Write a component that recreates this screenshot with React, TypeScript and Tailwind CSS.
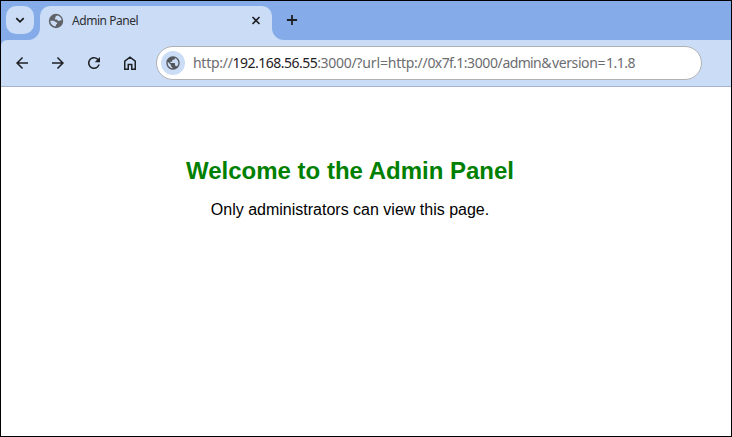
import React from "react";
import { MdArrowBack, MdArrowForward, MdRefresh, MdPublic } from "react-icons/md";

function TabGlobe() {
  return (
    <svg viewBox="0 0 16 16" className="size-4 shrink-0">
      <circle cx="8" cy="8" r="7.2" fill="#5f6368" />
      <path
        d="M9.4 2.5C8.2 2.9 7.4 3.3 7.5 4.2c.1.7-.7.8-.7 1.5 0 .9 1.1.8 1.9.9 1 .1.8 1.4 1.7 1.5.9.1 1.4-.4 2.1-.8.5-.2 1-.2 1.2.1C13.600 5 11.900 3 9.400 2.500Z"
        fill="#cbdcf6"
      />
      <path
        d="M2.300 7.800h3.200c1.100 0 1.200.8 2.100 1.200.8.3 1.700.5 1.700 1.300 0 .9-1.100.8-1.300 1.600-.2.600-.1 1.300-.9 1.700C4.500 13 2.400 10.900 2.300 7.800Z"
        fill="#cbdcf6"
      />
    </svg>
  );
}

function HomeIcon() {
  return (
    <svg
      viewBox="0 0 18 18"
      className="ml-[18px] size-[18px] shrink-0"
      fill="none"
      stroke="currentColor"
      strokeWidth="1.5"
    >
      <path d="M3.750 15.250V7.200L9 3.200l5.250 4v8.050h-3.500v-4.750h-3.500v4.750Z" />
    </svg>
  );
}

function ChevronIcon() {
  return (
    <svg viewBox="0 0 10 10" className="size-[10px]" fill="none" stroke="#17181b" strokeWidth="1.7">
      <path d="M1.300 3.200 5 6.900l3.700-3.700" />
    </svg>
  );
}

function CloseIcon() {
  return (
    <svg viewBox="0 0 14 14" className="size-[14px]" fill="none" stroke="#1f2024" strokeWidth="1.6">
      <path d="m3.500 3 7 7m0-7-7 7" />
    </svg>
  );
}

function PlusIcon() {
  return (
    <svg viewBox="0 0 18 18" className="size-[18px]" fill="none" stroke="#1f2024" strokeWidth="1.8">
      <path d="M9 3.900v10.200M3.900 9h10.200" />
    </svg>
  );
}

function Tab() {
  return (
    <div className="w-[232px] bg-[#85ace9] pt-[5px]">
      <div className="flex h-[34px] items-center rounded-t-[10px] bg-[#cbdcf6] pl-2 pr-[9px] pb-[5px]">
        <TabGlobe />
        <span className="ml-2 flex-1 whitespace-nowrap font-['Noto_Sans',sans-serif] text-[12px] leading-4 tracking-[-0.45px] text-[#2b2d31]">
          Admin Panel
        </span>
        <CloseIcon />
      </div>
    </div>
  );
}

function TabStrip() {
  return (
    <div className="flex h-[39px] shrink-0 bg-[#cbdcf6]">
      <div className="w-[39px] rounded-br-[12px] bg-[#85ace9] pl-[5px] pt-[5px]">
        <button className="flex size-7 items-center justify-center rounded-[10px] bg-[#cbdcf6]">
          <ChevronIcon />
        </button>
      </div>
      <Tab />
      <div className="flex-1 rounded-bl-[12px] bg-[#85ace9] pl-[11px] pt-[10px]">
        <PlusIcon />
      </div>
    </div>
  );
}

function Address() {
  return (
    <div className="ml-2 whitespace-nowrap font-['Noto_Sans',sans-serif] text-[14px] leading-5 text-[#6c6d70]">
      <span className="tracking-[-0.28px]">http://</span>
      <span className="tracking-[-0.52px] text-[#1f2024]">192.168.56.55</span>
      <span className="tracking-[-0.3px]">:3000/?</span>
      <span className="tracking-[-0.08px]">url=</span>
      <span className="tracking-[-0.28px]">http://</span>
      <span className="tracking-[-0.58px]">0x7f.1</span>
      <span className="tracking-[-0.38px]">:3000/</span>
      <span className="tracking-[-0.62px]">admin</span>
      <span className="tracking-[0.6px]">&amp;</span>
      <span className="tracking-[-0.4px]">version</span>
      <span className="tracking-[0.5px]">=</span>
      <span className="tracking-[-0.46px]">1.1.8</span>
    </div>
  );
}

function Toolbar() {
  return (
    <div className="h-[47px] shrink-0 bg-[#85ace9]">
      <div className="flex h-[47px] items-center rounded-tl-[6px] border-b border-[#a6b4d0] bg-[#cbdcf6] pl-3 pr-[29px] text-[#1f2024]">
        <MdArrowBack className="size-[18px]" />
        <MdArrowForward className="ml-[18px] size-[18px]" />
        <MdRefresh className="ml-[18px] size-[18px]" />
        <HomeIcon />
        <div className="ml-[17px] flex h-[34px] flex-1 items-center rounded-full border border-[#b1b1b3] bg-white pl-1">
          <div className="flex size-6 items-center justify-center rounded-full bg-[#cbdcf6]">
            <MdPublic className="size-4 text-[#54585d]" />
          </div>
          <Address />
        </div>
      </div>
    </div>
  );
}

export default function App() {
  return (
    <div className="flex h-[437px] w-[732px] flex-col border border-black bg-white">
      <TabStrip />
      <Toolbar />
      <main className="w-[698px] pt-[70px] text-center font-['Liberation_Sans',Arial,sans-serif]">
        <h1 className="text-[24px] font-bold leading-7 text-[#008000]">
          Welcome to the Admin Panel
        </h1>
        <p className="mt-4 text-[16px] leading-[18px] text-black">
          Only administrators can view this page.
        </p>
      </main>
    </div>
  );
}
